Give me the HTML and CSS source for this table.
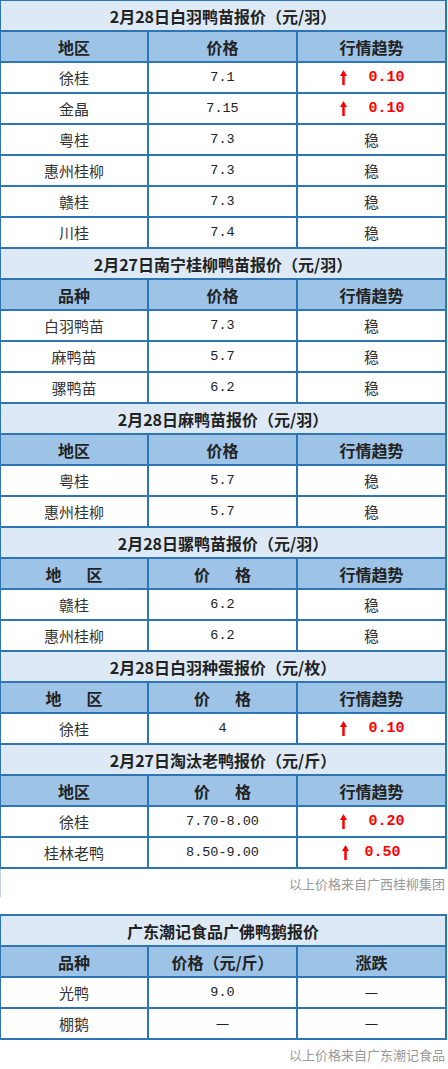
FILE: index.html
```html
<!DOCTYPE html>
<html lang="zh-CN">
<head>
<meta charset="utf-8">
<title>鸭苗报价</title>
<link rel="stylesheet" href="styles.css">
</head>
<body>
<div class="page">
  <div class="grid t1">
    <div class="t">2月28日白羽鸭苗报价（元/羽）</div>
    <div class="h">地区</div><div class="h">价格</div><div class="h">行情趋势</div>
    <div class="c">徐桂</div><div class="c num">7.1</div><div class="c up"><svg class="arr" viewBox="0 0 7 15"><polygon points="0,6 3.5,0 7,6"/><rect x="2.25" y="5" width="2.5" height="10"/></svg><span class="rn">0.10</span></div>
    <div class="c">金晶</div><div class="c num">7.15</div><div class="c up"><svg class="arr" viewBox="0 0 7 15"><polygon points="0,6 3.5,0 7,6"/><rect x="2.25" y="5" width="2.5" height="10"/></svg><span class="rn">0.10</span></div>
    <div class="c">粤桂</div><div class="c num">7.3</div><div class="c">稳</div>
    <div class="c">惠州桂柳</div><div class="c num">7.3</div><div class="c">稳</div>
    <div class="c">赣桂</div><div class="c num">7.3</div><div class="c">稳</div>
    <div class="c">川桂</div><div class="c num">7.4</div><div class="c">稳</div>

    <div class="t">2月27日南宁桂柳鸭苗报价（元/羽）</div>
    <div class="h">品种</div><div class="h">价格</div><div class="h">行情趋势</div>
    <div class="c">白羽鸭苗</div><div class="c num">7.3</div><div class="c">稳</div>
    <div class="c">麻鸭苗</div><div class="c num">5.7</div><div class="c">稳</div>
    <div class="c">骡鸭苗</div><div class="c num">6.2</div><div class="c">稳</div>

    <div class="t">2月28日麻鸭苗报价（元/羽）</div>
    <div class="h">地区</div><div class="h">价格</div><div class="h">行情趋势</div>
    <div class="c">粤桂</div><div class="c num">5.7</div><div class="c">稳</div>
    <div class="c">惠州桂柳</div><div class="c num">5.7</div><div class="c">稳</div>

    <div class="t">2月28日骡鸭苗报价（元/羽）</div>
    <div class="h">地<span class="gap"></span>区</div><div class="h">价<span class="gap"></span>格</div><div class="h">行情趋势</div>
    <div class="c">赣桂</div><div class="c num">6.2</div><div class="c">稳</div>
    <div class="c">惠州桂柳</div><div class="c num">6.2</div><div class="c">稳</div>

    <div class="t">2月28日白羽种蛋报价（元/枚）</div>
    <div class="h">地<span class="gap"></span>区</div><div class="h">价<span class="gap"></span>格</div><div class="h">行情趋势</div>
    <div class="c">徐桂</div><div class="c num">4</div><div class="c up"><svg class="arr" viewBox="0 0 7 15"><polygon points="0,6 3.5,0 7,6"/><rect x="2.25" y="5" width="2.5" height="10"/></svg><span class="rn">0.10</span></div>

    <div class="t">2月27日淘汰老鸭报价（元/斤）</div>
    <div class="h">地区</div><div class="h">价<span class="gap"></span>格</div><div class="h">行情趋势</div>
    <div class="c">徐桂</div><div class="c num">7.70-8.00</div><div class="c up"><svg class="arr" viewBox="0 0 7 15"><polygon points="0,6 3.5,0 7,6"/><rect x="2.25" y="5" width="2.5" height="10"/></svg><span class="rn">0.20</span></div>
    <div class="c">桂林老鸭</div><div class="c num">8.50-9.00</div><div class="c up tight"><svg class="arr" viewBox="0 0 7 15"><polygon points="0,6 3.5,0 7,6"/><rect x="2.25" y="5" width="2.5" height="10"/></svg><span class="rn">0.50</span></div>
  </div>
  <div class="note bar">以上价格来自广西桂柳集团</div>

  <div class="grid t2">
    <div class="t">广东潮记食品广佛鸭鹅报价</div>
    <div class="h">品种</div><div class="h">价格（元/斤）</div><div class="h">涨跌</div>
    <div class="c">光鸭</div><div class="c num">9.0</div><div class="c dash">—</div>
    <div class="c">棚鹅</div><div class="c dash">—</div><div class="c dash">—</div>
  </div>
  <div class="note">以上价格来自广东潮记食品</div>
</div>
</body>
</html>
```

FILE: styles.css
```css
html, body {
  margin: 0;
  padding: 0;
  background: #ffffff;
}
body {
  font-family: "Noto Sans CJK SC", "Noto Sans", sans-serif;
  color: #333333;
}
.page {
  width: 448px;
}
.grid {
  display: grid;
  grid-template-columns: 146px 147px 147px;
  grid-auto-rows: 29px;
  gap: 2px;
  background: #2e75b6;
  width: 447px;
  box-sizing: border-box;
}
.t1 {
  padding: 1px 2px 2px 1px;
}
.t2 {
  padding: 2px 2px 2px 1px;
}
.t, .h, .c {
  display: flex;
  align-items: center;
  justify-content: center;
  white-space: nowrap;
}
.t {
  grid-column: 1 / 4;
  background: #ddeaf6;
  font-weight: bold;
  font-size: 16px;
  color: #222222;
}
.h {
  background: #9dc3e6;
  font-weight: bold;
  font-size: 16px;
  color: #222222;
}
.c {
  background: #ffffff;
  font-size: 15px;
  color: #333333;
}
.num {
  font-family: "Liberation Mono", monospace;
  font-size: 13.5px;
  color: #222222;
}
.gap {
  display: inline-block;
  width: 25px;
}
.up {
  gap: 21px;
  padding-left: 2px;
}
.up.tight {
  gap: 15px;
  padding-left: 0;
}
.arr {
  width: 7px;
  height: 15px;
  fill: #ff0000;
}
.rn {
  font-family: "Liberation Mono", monospace;
  font-weight: bold;
  font-size: 15px;
  color: #ff0000;
}
.dash {
  font-family: "Liberation Sans", sans-serif;
  font-size: 12px;
  color: #222222;
}
.note {
  height: 29px;
  display: flex;
  align-items: center;
  justify-content: flex-end;
  padding-right: 3px;
  font-size: 13px;
  color: #999999;
  box-sizing: border-box;
}
.note.bar {
  height: 28px;
  margin-bottom: 17px;
  border-left: 1px solid #c8d0e8;
}
```
